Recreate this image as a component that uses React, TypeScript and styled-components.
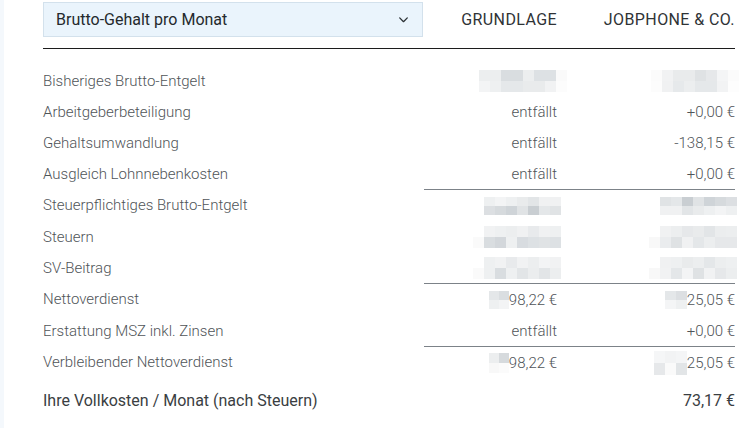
import React from "react";
import styled, { createGlobalStyle } from "styled-components";

const Global = createGlobalStyle`
  html, body { margin: 0; padding: 0; background: #fff; }
  body { font-family: Roboto, "Liberation Sans", Arial, sans-serif; }
`;

const Page = styled.div`
  width: 752px;
  height: 428px;
  box-sizing: border-box;
  border-left: 4px solid #f4f8fc;
  padding: 2px 0 0 39px;
  overflow: hidden;
`;

const Table = styled.div`
  width: 692px;
  display: grid;
  grid-template-columns: 381px 133px 178px;
`;

const HeaderCell = styled.div<{ $first?: boolean }>`
  height: 47px;
  box-sizing: border-box;
  border-bottom: 1px solid #1c1c1c;
  display: flex;
  align-items: flex-start;
  justify-content: ${(p) => (p.$first ? "flex-start" : "flex-end")};
  font-size: 16px;
  letter-spacing: ${(p) => (p.$first ? "0" : "0.4px")};
  color: #2f3336;
  padding-top: ${(p) => (p.$first ? "0" : "8px")};
`;

const Select = styled.div`
  width: 380px;
  height: 35px;
  box-sizing: border-box;
  background: #eaf4fc;
  border: 1px solid #d3e1ec;
  display: flex;
  align-items: center;
  justify-content: space-between;
  padding: 0 12px 0 12px;
  font-size: 16px;
  letter-spacing: 0;
  color: #24292d;
`;

const Spacer = styled.div`
  grid-column: 1 / -1;
  height: 16px;
`;

const Cell = styled.div<{ $num?: boolean; $line?: boolean; $total?: boolean }>`
  height: ${(p) => (p.$total ? "42px" : p.$line ? "32px" : "31px")};
  padding-top: ${(p) => (p.$total ? "3px" : "0")};
  box-sizing: border-box;
  display: flex;
  align-items: center;
  justify-content: ${(p) => (p.$num ? "flex-end" : "flex-start")};
  border-top: ${(p) => (p.$line ? "1px solid #7c8288" : "none")};
  font-size: ${(p) => (p.$total ? "16px" : "15px")};
  font-weight: ${(p) => (p.$total ? 400 : 300)};
  color: ${(p) => (p.$total ? "#3a3e42" : "#4f5458")};
  white-space: nowrap;
`;

const Mosaic = styled.div<{ $cols: number; $w: number; $h: number; $shift: number }>`
  display: grid;
  grid-template-columns: repeat(${(p) => p.$cols}, ${(p) => p.$w}px);
  grid-auto-rows: ${(p) => p.$h}px;
  margin-right: ${(p) => p.$shift}px;
`;

const Px = styled.div<{ $c: string }>`
  background: ${(p) => p.$c};
`;

const Inline = styled.span`
  display: flex;
  align-items: center;
`;

type MosaicProps = { cols: number; w: number; h: number; shift?: number; shades: string[] };
const Blur = ({ cols, w, h, shift = 0, shades }: MosaicProps) => (
  <Mosaic $cols={cols} $w={w} $h={h} $shift={shift}>
    {shades.map((c, i) => (
      <Px key={i} $c={c} />
    ))}
  </Mosaic>
);

const A = [
  "#eceeef", "#eceeef", "#d9dde0", "#d9dde0", "#eceeef", "#dde1e4", "#dde1e4", "#fafafa",
  "#f3f4f5", "#eef0f1", "#e5e8ea", "#e5e8ea", "#e9ebec", "#e9ebec", "#f1f2f3", "#fcfcfc",
];
const B = [
  "#fbfbfb", "#f1f2f3", "#e9ebec", "#e9ebec", "#dfe2e4", "#e6e8ea", "#f4f5f6", "#fbfbfb",
  "#fcfcfc", "#f0f1f2", "#e6e9eb", "#eceeef", "#e5e8ea", "#e5e8ea", "#f2f3f4", "#fdfdfd",
];
const S1 = [
  "#eef0f1", "#f3f4f5", "#eef0f1", "#e9ebec", "#e2e5e7", "#f0f1f2", "#f0f1f2",
  "#dcdfe2", "#d6dadd", "#cfd4d8", "#e0e3e5", "#c9ced2", "#e4e7e9", "#e0e3e5",
];
const S2 = [
  "#ffffff", "#f1f2f3", "#eef0f1", "#eceeef", "#f0f1f2", "#e8eaec", "#f0f1f2", "#eef0f1",
  "#fafafa", "#d9dde0", "#d3d7db", "#eef0f1", "#d8dce0", "#dde1e4", "#e0e3e5", "#dde1e4",
];
const T = [
  "#ffffff", "#eef0f1", "#f1f2f3", "#e8eaec", "#f1f2f3", "#eceeef", "#f3f4f5", "#f1f2f3",
  "#fafafa", "#eef0f1", "#d9dde0", "#eef0f1", "#e2e5e7", "#ebedee", "#e2e5e7", "#eceeef",
];
const U = [
  "#ffffff", "#f0f1f2", "#eceeef", "#e6e8ea", "#e9ebec", "#e2e5e7", "#ebedee", "#eceeef",
  "#f8f8f8", "#eaecee", "#dfe2e4", "#f0f1f2", "#e4e7e9", "#eceeef", "#e6e8ea", "#e6e8ea",
];
const V = [
  "#ffffff", "#f0f1f2", "#eef0f1", "#e9ebec", "#eceeef", "#e4e7e9", "#eceeef", "#eef0f1",
  "#f8f8f8", "#f1f2f3", "#e4e7e9", "#f3f4f5", "#dfe2e4", "#f1f2f3", "#e6e8ea", "#eceeef",
];
const N1 = ["#e4e7e9", "#dadee1", "#eef0f1", "#f3f4f5"];
const N2 = ["#eceeef", "#d6dadd", "#f8f8f8", "#fbfbfb"];
const N3 = ["#e4e7e9", "#dcdfe2", "#f4f5f6", "#eef0f1"];
const N4 = ["#f5f6f7", "#f2f3f4", "#f4f5f6", "#e6e8ea", "#fafafa", "#e2e5e7"];

const Chevron = () => (
  <svg width="13" height="13" viewBox="0 0 24 24" fill="none" stroke="#2b3034" strokeWidth="2.4" strokeLinecap="round" strokeLinejoin="round">
    <polyline points="5 9 12 16 19 9" />
  </svg>
);

type Row = {
  label: string;
  a: React.ReactNode;
  b: React.ReactNode;
  line?: boolean;
};

const rows: Row[] = [
  { label: "Bisheriges Brutto-Entgelt", a: <Blur cols={8} w={11} h={11} shift={-10} shades={A} />, b: <Blur cols={8} w={11} h={11} shift={-4} shades={B} /> },
  { label: "Arbeitgeberbeteiligung", a: "entfällt", b: "+0,00 €" },
  { label: "Gehaltsumwandlung", a: "entfällt", b: "-138,15 €" },
  { label: "Ausgleich Lohnnebenkosten", a: "entfällt", b: "+0,00 €" },
  { label: "Steuerpflichtiges Brutto-Entgelt", line: true, a: <Blur cols={7} w={11} h={9} shift={-4} shades={S1} />, b: <Blur cols={7} w={11} h={9} shift={-2} shades={S1.slice().reverse()} /> },
  { label: "Steuern", a: <Blur cols={8} w={11} h={11} shift={-4} shades={S2} />, b: <Blur cols={8} w={11} h={11} shift={-2} shades={U} /> },
  { label: "SV-Beitrag", a: <Blur cols={8} w={11} h={11} shift={-4} shades={T} />, b: <Blur cols={8} w={11} h={11} shift={-2} shades={V} /> },
  {
    label: "Nettoverdienst",
    line: true,
    a: <Inline><Blur cols={2} w={10} h={9} shades={N1} />98,22 €</Inline>,
    b: <Inline><Blur cols={2} w={11} h={9} shades={N3} />25,05 €</Inline>,
  },
  { label: "Erstattung MSZ inkl. Zinsen", a: "entfällt", b: "+0,00 €" },
  {
    label: "Verbleibender Nettoverdienst",
    line: true,
    a: <Inline><Blur cols={2} w={10} h={10} shades={N2} />98,22 €</Inline>,
    b: <Inline><Blur cols={3} w={11} h={12} shades={N4} />25,05 €</Inline>,
  },
];

export default function App() {
  return (
    <>
      <Global />
      <Page>
        <Table>
          <HeaderCell $first>
            <Select>
              <span>Brutto-Gehalt pro Monat</span>
              <Chevron />
            </Select>
          </HeaderCell>
          <HeaderCell>GRUNDLAGE</HeaderCell>
          <HeaderCell>JOBPHONE &amp; CO.</HeaderCell>
          <Spacer />
          {rows.map((r) => (
            <React.Fragment key={r.label}>
              <Cell $line={false}>{r.label}</Cell>
              <Cell $num $line={r.line}>{r.a}</Cell>
              <Cell $num $line={r.line}>{r.b}</Cell>
            </React.Fragment>
          ))}
          <Cell $total>Ihre Vollkosten / Monat (nach Steuern)</Cell>
          <Cell $total $num />
          <Cell $total $num>73,17 €</Cell>
        </Table>
      </Page>
    </>
  );
}
